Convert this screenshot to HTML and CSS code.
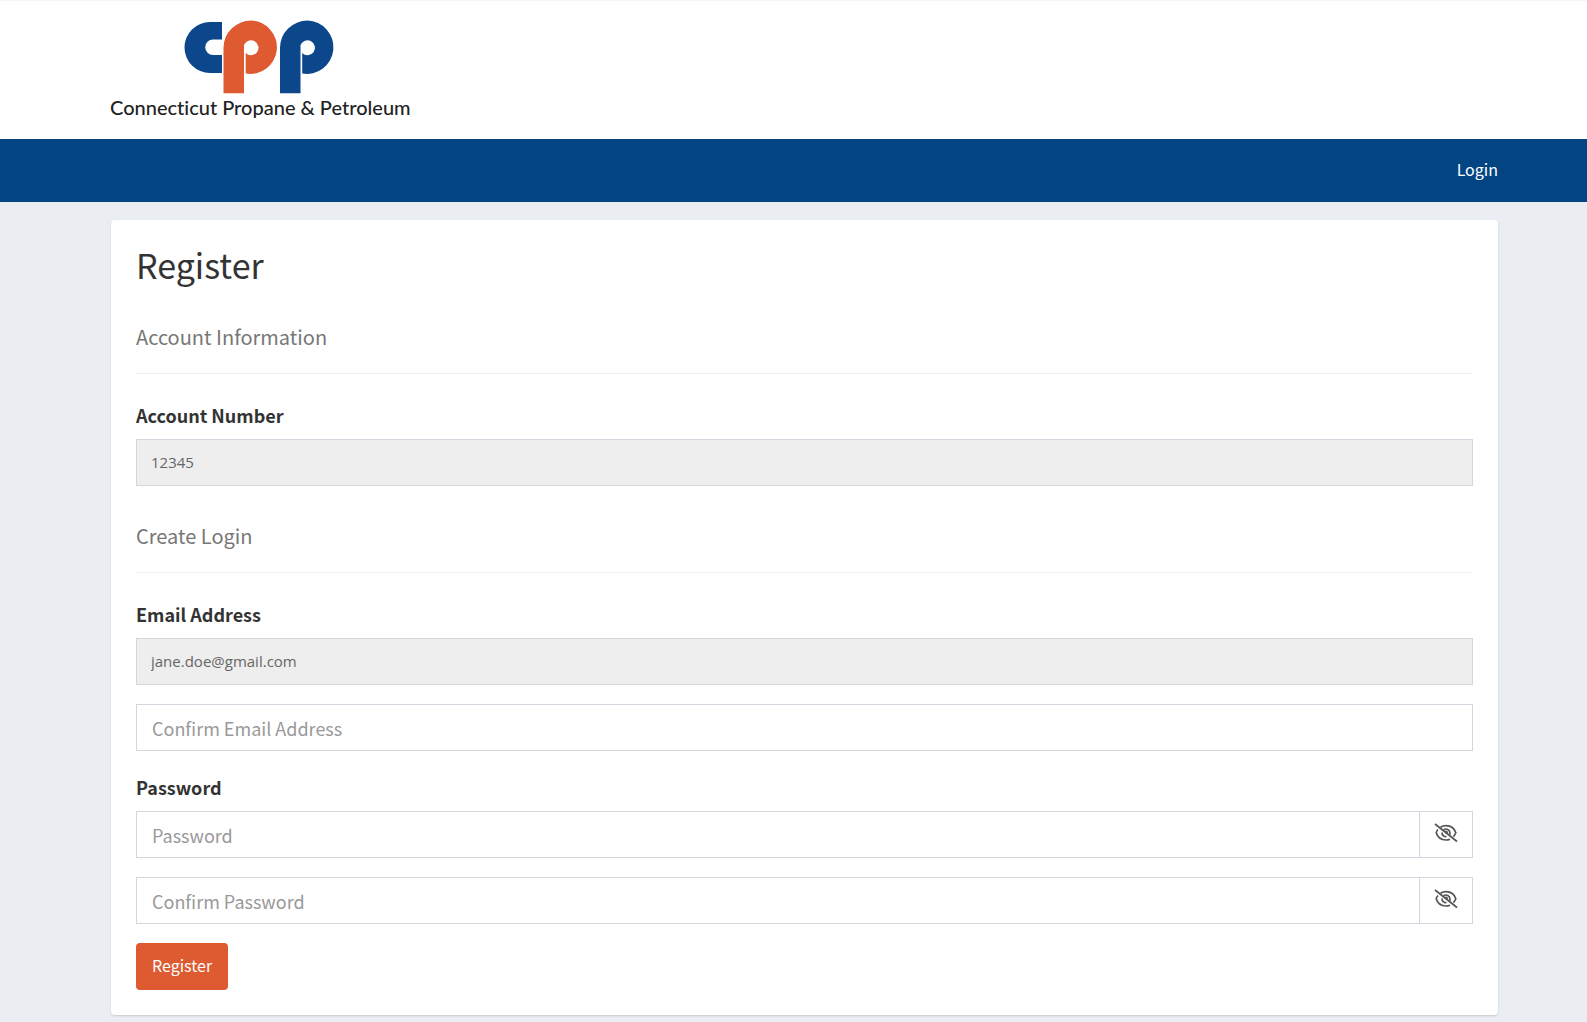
FILE: index.html
```html
<!DOCTYPE html>
<html lang="en">
<head>
    <meta charset="UTF-8">
    <meta name="viewport" content="width=device-width, initial-scale=1.0">
    <title>Register - Connecticut Propane &amp; Petroleum</title>
    <link rel="stylesheet" href="styles.css">
</head>
<body>

<svg class="sprite" aria-hidden="true">
    <symbol id="eye-off" viewBox="0 0 24 20">
        <g fill="none" stroke="currentColor" stroke-width="1.7">
            <path d="M6.5 4.2C8 3.2 10 2.6 12 2.6c5 0 8.500 2.800 9.800 7.200-.5 1.500-1.300 2.800-2.400 3.900"/>
            <path d="M4 6.500C3 7.500 2.400 8.700 2.200 9.800c1.300 4.400 4.800 7.200 9.800 7.200 1.500 0 2.800-.3 4-.8"/>
            <path d="M9.500 6.700c2.800-1.700 6.500 0 6.500 3.400 0 .6-.1 1.100-.3 1.600"/>
            <path d="M8 9.500c-.1 2.500 1.800 4.300 4.500 4.200"/>
            <path d="M1 1l22 17.500"/>
        </g>
        <path fill="currentColor" d="M11 8.200c0-1.200 2.800-1 3 1.600l-.5 1.200z"/>
    </symbol>
</svg>

<header class="header">
    <div class="container">
        <a href="#" class="logo">
            <svg width="298" height="100" viewBox="0 0 298 100" role="img" aria-label="Connecticut Propane &amp; Petroleum">
                <path class="logo-blue" d="M111 2H99a25.500 25.500 0 0 0 0 51h12V35h-9a7.800 7.800 0 0 1 0-15.600h9z"/>
                <path class="logo-orange" d="M112.500 73.300V27.500A27.500 27 0 0 1 140 .6a26.700 26.700 0 1 1-5.300 53V33A7.500 7.500 0 1 0 133 25v48.300z"/>
                <path class="logo-blue" d="M169 73.300V27.500A27.500 27 0 0 1 196.500 .6a26.700 26.700 0 1 1-5.300 53V33A7.500 7.500 0 1 0 189.500 25v48.300z"/>
                <text class="logo-text" x="-1" y="95">Connecticut Propane &amp; Petroleum</text>
            </svg>
        </a>
    </div>
</header>

<nav class="navbar">
    <div class="container">
        <a href="#" class="nav-link">Login</a>
    </div>
</nav>

<main class="container">
    <form class="panel">
        <h1>Register</h1>

        <h2>Account Information</h2>
        <div class="form-group">
            <label for="accountNumber">Account Number</label>
            <input type="text" id="accountNumber" class="form-control" value="12345" readonly>
        </div>

        <h2>Create Login</h2>
        <div class="form-group">
            <label for="email">Email Address</label>
            <input type="email" id="email" class="form-control" value="jane.doe@gmail.com" readonly>
            <input type="email" id="confirmEmail" class="form-control" placeholder="Confirm Email Address" aria-label="Confirm Email Address">
        </div>
        <div class="form-group">
            <label for="password">Password</label>
            <div class="input-group">
                <input type="password" id="password" class="form-control" placeholder="Password">
                <button type="button" class="toggle" aria-label="Show password"><svg width="24" height="20"><use href="#eye-off"/></svg></button>
            </div>
            <div class="input-group">
                <input type="password" id="confirmPassword" class="form-control" placeholder="Confirm Password" aria-label="Confirm Password">
                <button type="button" class="toggle" aria-label="Show confirm password"><svg width="24" height="20"><use href="#eye-off"/></svg></button>
            </div>
        </div>
        <button type="submit" class="btn">Register</button>
    </form>
</main>

</body>
</html>
```
FILE: styles.css
```css
* {
    box-sizing: border-box;
}
body {
    margin: 0;
    background-color: #eaeef3;
    color: #333;
    font-family: "Noto Sans CJK SC", sans-serif;
    font-size: 18px;
    line-height: 24px;
}
.sprite {
    display: none;
}
.container {
    width: 100%;
    padding: 0 89px 0 111px;
}
.header {
    background-color: #fff;
    border-top: 1px solid #f5f5f5;
    padding: 19px 0;
}
.logo {
    display: block;
}
.logo svg {
    display: block;
    overflow: visible;
}
.logo-blue {
    fill: #0b478a;
}
.logo-orange {
    fill: #df5a30;
}
.logo-text {
    fill: #222;
    font-family: Lato, sans-serif;
    font-size: 20px;
    font-weight: 500;
    font-variant-ligatures: none;
}
.navbar {
    background-color: #034582;
}
.navbar .container {
    display: flex;
    justify-content: flex-end;
}
.nav-link {
    padding: 18px 0 21px;
    color: #fff;
    font-size: 16px;
    text-decoration: none;
}
.panel {
    margin: 18px 0 7px;
    padding: 25px;
    background-color: #fff;
    border-radius: 4px;
    box-shadow: 0 1px 2px rgba(0, 0, 0, 0.15);
}
h1 {
    margin: 0 0 36px;
    font-size: 34px;
    font-weight: 400;
    line-height: 40px;
}
h2 {
    margin: 34px 0 24px;
    padding-bottom: 20px;
    border-bottom: 1px solid #eee;
    color: #777;
    font-size: 20px;
    font-weight: 400;
    line-height: 32px;
}
.form-group {
    margin-bottom: 19px;
}
label {
    display: block;
    padding: 5px 0 12px;
    font-weight: 700;
}
.form-control {
    display: block;
    width: 100%;
    height: 47px;
    padding: 0 15px;
    border: 1px solid #d2d6de;
    border-radius: 0;
    background-color: #fff;
    color: #555;
    font-family: inherit;
    font-size: 18px;
}
.form-control::placeholder {
    color: #999;
    opacity: 1;
}
.form-control[readonly] {
    padding: 0 14px 2px;
    background-color: #eee;
    color: #666;
    font-family: "Open Sans", sans-serif;
    font-size: 15px;
}
.form-control + .form-control,
.input-group + .input-group {
    margin-top: 19px;
}
.input-group {
    display: flex;
}
.toggle {
    flex: 0 0 53px;
    padding: 0;
    border: 1px solid #d2d6de;
    border-left: 0;
    background-color: #fff;
    color: #555;
    cursor: pointer;
}
.btn {
    display: block;
    height: 47px;
    padding: 0 16px 3px;
    border: 0;
    border-radius: 4px;
    background-color: #de5a31;
    color: #fff;
    font-family: inherit;
    font-size: 16px;
    cursor: pointer;
}
```
